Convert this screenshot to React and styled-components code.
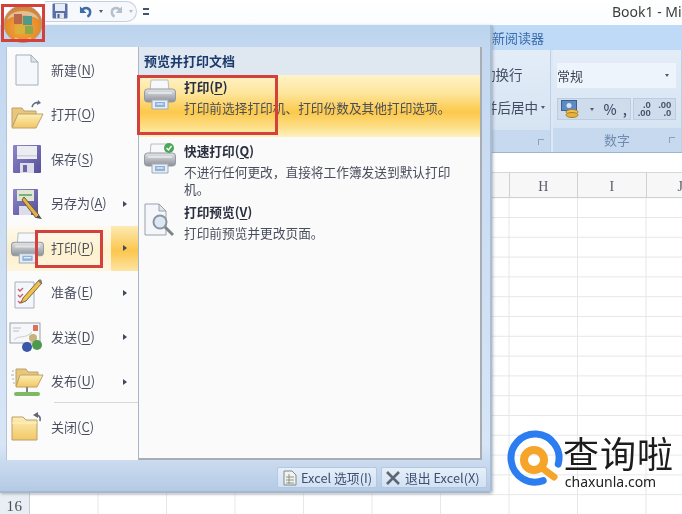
import React from 'react';
import styled, { createGlobalStyle } from 'styled-components';

const GlobalStyle = createGlobalStyle`
    html, body {
        margin: 0;
        padding: 0;
        background: #fff;
    }
    body {
        font-family: "Noto Sans CJK SC", "Noto Sans", sans-serif;
    }
`;

const Page = styled.div`
    position: relative;
    width: 682px;
    height: 514px;
    overflow: hidden;
    display: flex;
    flex-direction: column;
    background: #fff;
    filter: blur(0.4px);
`;

/* title bar and quick access */
const TitleBar = styled.div`
    height: 25px;
    flex: none;
    display: flex;
    align-items: center;
    padding-left: 45px;
    background: linear-gradient(#fff, #fafcfe);
    white-space: nowrap;
    overflow: hidden;
`;

const QuickAccess = styled.div`
    width: 92px;
    height: 21px;
    flex: none;
    box-sizing: border-box;
    display: flex;
    align-items: center;
    gap: 3px;
    padding-left: 7px;
    margin-top: -3px;
    border: 1px solid #c3d0e0;
    border-left: none;
    border-radius: 0 12px 12px 0;
    background: #f6f8fb;
`;

const TinyArrow = styled.span`
    width: 0;
    height: 0;
    margin: 0 3px;
    border: 2.5px solid transparent;
    border-top: 3px solid ${(props) => (props.$faded ? '#b5bcc6' : '#4a5a70')};
    border-bottom: none;
`;

const Customize = styled.span`
    width: 6px;
    height: 3px;
    margin-left: 6px;
    margin-top: -2px;
    flex: none;
    border-top: 2px solid #44536a;
    border-bottom: 2px solid #44536a;
`;

const BookTitle = styled.span`
    margin-left: 463px;
    margin-top: -2px;
    font-family: "Noto Sans", sans-serif;
    font-size: 14px;
    color: #3c3c3c;
`;

/* ribbon */
const TabStrip = styled.div`
    height: 25px;
    flex: none;
    box-sizing: border-box;
    padding-left: 492px;
    font-size: 13px;
    line-height: 25px;
    color: #3b6bab;
    background: #bfdaf7;
`;

const Ribbon = styled.div`
    height: 103px;
    flex: none;
    display: flex;
    background: #dce8f5;
    border-bottom: 1px solid #9db4cf;
    box-sizing: border-box;
`;

const RibbonGroup = styled.div`
    width: ${(props) => props.$width}px;
    flex: none;
    display: flex;
    flex-direction: column;
    box-sizing: border-box;
    margin-right: 2px;
    border-right: 1px solid #bed0e4;
    background: linear-gradient(#e3edf8, #d3e1f1);
`;

const GroupBody = styled.div`
    height: 80px;
    box-sizing: border-box;
    display: flex;
    flex-direction: column;
    padding-top: ${(props) => props.$top}px;
    gap: ${(props) => props.$gap}px;
`;

const AlignLabel = styled.div`
    margin-left: ${(props) => props.$left}px;
    height: 20px;
    display: flex;
    align-items: center;
    font-size: 13.5px;
    line-height: 20px;
    color: #3f4d62;
    white-space: nowrap;
`;

const GroupFoot = styled.div`
    position: relative;
    flex: 1;
    text-align: center;
    font-size: 13px;
    line-height: 24px;
    color: #6f8cb0;
    background: #c6d9ee;
`;

const Launcher = styled.span`
    position: absolute;
    right: ${(props) => props.$right}px;
    top: 9px;
    width: 5px;
    height: 5px;
    border-top: 1px solid #8ba2bd;
    border-left: 1px solid #8ba2bd;
`;

const NumberFormat = styled.div`
    margin-left: 4px;
    width: 119px;
    height: 25px;
    box-sizing: border-box;
    display: flex;
    align-items: center;
    justify-content: space-between;
    padding: 0 4px 0 0;
    font-size: 13px;
    color: #3a4454;
    background: #eef4fb;
`;

const NumberTools = styled.div`
    margin-left: 4px;
    width: 119px;
    display: flex;
    gap: 2px;
`;

const ToolSet = styled.div`
    height: 22px;
    width: ${(props) => props.$width}px;
    box-sizing: border-box;
    display: flex;
    align-items: center;
    justify-content: space-around;
    font-size: 14px;
    font-weight: 500;
    color: #44506a;
    background: #cfdcec;
    border: 1px solid #bccde1;
`;

const Decimals = styled.span`
    font-family: "Liberation Sans", sans-serif;
    font-size: 9.5px;
    font-weight: 700;
    line-height: 8px;
    text-align: right;
    color: #46536a;
`;

const FormulaBar = styled.div`
    height: 20px;
    flex: none;
    background: #fff;
    border-bottom: 1px solid #d3d8df;
    box-sizing: border-box;
`;

/* sheet */
const ColumnHeaders = styled.div`
    height: 25px;
    flex: none;
    display: flex;
    background: #f7f7f8;
    border-bottom: 1px solid #cdd0d5;
    box-sizing: border-box;
    padding-left: 30px;
`;

const ColumnHead = styled.div`
    width: 68.5px;
    flex: none;
    box-sizing: border-box;
    text-align: center;
    font-family: "Liberation Serif", serif;
    font-size: 14px;
    line-height: 28px;
    color: #5a6068;
    border-right: 1px solid #cdd0d5;
`;

const Sheet = styled.div`
    flex: 1;
    display: flex;
    min-height: 0;
`;

const RowHeaders = styled.div`
    width: 30px;
    flex: none;
    background: #e9eef4;
    border-right: 1px solid #c8ccd2;
    box-sizing: border-box;
`;

const RowHead = styled.div`
    height: 19.8px;
    line-height: 22px;
    text-align: center;
    font-family: "Liberation Serif", serif;
    font-size: 15px;
    color: #4a5058;
    letter-spacing: 0.5px;
`;

const Cells = styled.div`
    flex: 1;
    background-image:
        linear-gradient(to right, #e6e7e9 1px, transparent 1px),
        linear-gradient(to bottom, #e6e7e9 1px, transparent 1px);
    background-size: 68.5px 19.8px;
    background-position: 67.5px 0, 0 -0.8px;
`;

/* office menu */
const OfficeMenu = styled.div`
    position: absolute;
    left: 0;
    top: 25px;
    width: 492px;
    height: 468px;
    box-sizing: border-box;
    display: flex;
    flex-direction: column;
    padding: 22px 8px 0 6px;
    background: linear-gradient(#bcd4ee 0, #c3d8f0 5%, #d7e5f6 90%, #b4cae4 100%);
    border-bottom: 2px solid #a8b8cb;
    border-right: 2px solid #a9bdd5;
    border-radius: 0 0 3px 0;
    box-shadow: 1px 1px 3px rgba(90, 100, 115, 0.45);
`;

const MenuBody = styled.div`
    height: 413px;
    flex: none;
    display: flex;
    background: #fbfafa;
`;

const LeftColumn = styled.div`
    width: 132px;
    flex: none;
    box-sizing: border-box;
    padding-top: 1px;
    background: #fcfbfb;
    border-left: 1px solid #b4c4d6;
`;

const MenuRow = styled.div`
    position: relative;
    height: 44.5px;
    display: flex;
    align-items: center;
    box-sizing: border-box;
    padding-left: 1px;
    background: ${(props) => (props.$active ? 'linear-gradient(#fefaf0, #fdf0cc 55%, #fdf5df)' : 'transparent')};
`;

const RowIcon = styled.span`
    width: 38px;
    height: 36px;
    flex: none;
    display: flex;
    align-items: center;
    justify-content: center;
`;

const RowLabel = styled.span`
    margin: -2px 0 0 5px;
    font-size: 13px;
    color: #4b5162;
    white-space: nowrap;
    u {
        text-underline-offset: 2px;
    }
`;

const SplitArrow = styled.span`
    position: absolute;
    right: 0;
    top: 0;
    bottom: 0;
    width: 27px;
    display: flex;
    align-items: center;
    justify-content: center;
    background: ${(props) => (props.$active ? 'linear-gradient(#fdeab4, #fbc64d 55%, #fde5a4)' : 'transparent')};
`;

const ArrowGlyph = styled.span`
    width: 0;
    height: 0;
    margin-left: 1px;
    border: 3px solid transparent;
    border-left: 4px solid #3f4a5a;
    border-right: none;
`;

const MenuDivider = styled.div`
    margin: -2px 0 2px 47px;
    height: 1px;
    background: #d5d7db;
`;

const RightPanel = styled.div`
    flex: 1;
    min-width: 0;
    border-left: 1px solid #a6b7ca;
    border-right: 2px solid #a8adb4;
    border-bottom: 2px solid #a9adb3;
    background: #fbfafa;
`;

const PanelHeader = styled.div`
    height: 28px;
    box-sizing: border-box;
    padding-left: 5px;
    font-size: 13px;
    font-weight: 700;
    line-height: 28px;
    color: #1d3a6c;
    background: #dfe7f0;
`;

const PanelItem = styled.div`
    height: ${(props) => props.$height}px;
    box-sizing: border-box;
    display: flex;
    padding: ${(props) => props.$top}px 24px 0 4px;
    background: ${(props) => (props.$active
        ? 'linear-gradient(#fef3c8 0, #fde59a 30%, #fcc84a 60%, #fde08a 85%, #fef0c0 100%)'
        : 'transparent')};
`;

const PanelIcon = styled.span`
    width: 41px;
    flex: none;
`;

const PanelText = styled.div`
    min-width: 0;
`;

const PanelTitle = styled.div`
    font-size: 12.7px;
    font-weight: 700;
    line-height: 18px;
    color: #2a3040;
    u {
        text-underline-offset: 2px;
    }
`;

const PanelDesc = styled.div`
    margin-top: 2.5px;
    font-size: 12.7px;
    line-height: 17px;
    color: #484e5c;
`;

const MenuFooter = styled.div`
    flex: 1;
    display: flex;
    justify-content: flex-end;
    align-items: flex-start;
    gap: 4px;
    padding-top: 7px;
    margin-right: -5px;
`;

const FooterButton = styled.div`
    width: ${(props) => props.$width}px;
    height: 21px;
    box-sizing: border-box;
    display: flex;
    align-items: center;
    gap: 4px;
    padding-left: ${(props) => props.$pad}px;
    font-size: 12.8px;
    color: #3e4f6e;
    white-space: nowrap;
    background: linear-gradient(#e6effa, #d2e1f4);
    border: 1px solid #b4c8e0;
    border-radius: 2px;
`;

/* annotations */
const RedBox = styled.div`
    position: absolute;
    left: ${(props) => props.$x}px;
    top: ${(props) => props.$y}px;
    width: ${(props) => props.$w}px;
    height: ${(props) => props.$h}px;
    box-sizing: border-box;
    border: 3px solid #d4403c;
`;

const Orb = styled.div`
    position: absolute;
    left: 3px;
    top: 5px;
    width: 40px;
    height: 38px;
`;

const Watermark = styled.div`
    position: absolute;
    left: 507px;
    top: 430px;
    display: flex;
    align-items: flex-start;
    gap: 0;
`;

const BrandText = styled.div`
    display: flex;
    flex-direction: column;
    align-items: center;
`;

const BrandName = styled.div`
    font-size: 36px;
    line-height: 44px;
    letter-spacing: 1px;
    color: #1c1c1c;
    white-space: nowrap;
`;

const BrandUrl = styled.div`
    margin-left: -16px;
    font-family: "Noto Sans", sans-serif;
    font-size: 14px;
    line-height: 16px;
    color: #222;
`;

/* drawings */
const Defs = () => (
    <svg width="0" height="0" style={{ position: 'absolute' }}>
        <defs>
            <linearGradient id="printerBody" x1="0" y1="0" x2="0" y2="1">
                <stop offset="0" stopColor="#e2e4e6" />
                <stop offset="0.5" stopColor="#b7bbc0" />
                <stop offset="1" stopColor="#8b9096" />
            </linearGradient>
            <linearGradient id="folderFill" x1="0" y1="0" x2="0" y2="1">
                <stop offset="0" stopColor="#fdeeb4" />
                <stop offset="1" stopColor="#f2c766" />
            </linearGradient>
            <linearGradient id="diskFill" x1="0" y1="0" x2="1" y2="1">
                <stop offset="0" stopColor="#8f86c8" />
                <stop offset="1" stopColor="#55509a" />
            </linearGradient>
            <radialGradient id="orbFill" cx="0.5" cy="0.6" r="0.6">
                <stop offset="0" stopColor="#f3ab3e" />
                <stop offset="0.75" stopColor="#e58a2c" />
                <stop offset="1" stopColor="#b98258" />
            </radialGradient>
        </defs>
    </svg>
);

const PrinterIcon = ({ size = 34, badge = false }) => (
    <svg width={size} height={size} viewBox="0 0 34 34">
        <path d="M8 2h17l1 11H7z" fill="#f7f8f9" stroke="#b9bec4" />
        <rect x="1.500" y="11" width="31" height="13" rx="3" fill="url(#printerBody)" stroke="#969ba1" />
        <rect x="5" y="14" width="24" height="2" fill="#eceef0" opacity="0.7" />
        <path d="M9 22h16v9H9z" fill="#e6edf5" stroke="#a0aab6" />
        <rect x="12" y="24" width="10" height="5" fill="#8fb2dc" />
        <path d="M13.500 26h7" stroke="#fff" />
        {badge && (
            <>
                <circle cx="26" cy="6" r="5" fill="#4aa75a" />
                <path d="M23.500 6l2 2 3-4" stroke="#fff" strokeWidth="1.400" fill="none" />
            </>
        )}
    </svg>
);

const DocIcon = () => (
    <svg width="26" height="32" viewBox="0 0 26 32">
        <path d="M2 1h15l7 7v23H2z" fill="#f4f7fb" stroke="#a5afbc" />
        <path d="M17 1v7h7z" fill="#dfe5ec" stroke="#a5afbc" />
    </svg>
);

const OpenFolderIcon = () => (
    <svg width="34" height="30" viewBox="0 0 34 30">
        <path d="M22 7c1-4 4-5 7-4" stroke="#5f6c7c" strokeWidth="1.600" fill="none" />
        <path d="M28 0l3 3-4 2z" fill="#5f6c7c" />
        <path d="M2 27V8h10l2 3h12v4H8z" fill="#e8c67a" stroke="#b8a070" />
        <path d="M2 28l6-14h25l-7 14z" fill="url(#folderFill)" stroke="#c0a265" />
    </svg>
);

const FloppyIcon = () => (
    <svg width="30" height="30" viewBox="0 0 30 30">
        <rect x="1" y="1" width="28" height="28" rx="1" fill="url(#diskFill)" />
        <rect x="5" y="2" width="20" height="13" fill="#ecedf3" />
        <rect x="5" y="11" width="20" height="1.500" fill="#cfd2dc" />
        <rect x="8" y="19" width="14" height="10" fill="#dcdde8" />
        <rect x="11" y="21" width="4" height="7" fill="#6a64a8" />
    </svg>
);

const SaveAsIcon = () => (
    <svg width="32" height="32" viewBox="0 0 32 32">
        <rect x="2" y="1" width="25" height="26" rx="1" fill="url(#diskFill)" />
        <rect x="6" y="2" width="17" height="11" fill="#dfe6d4" />
        <rect x="8" y="6" width="13" height="2" fill="#7fae78" />
        <rect x="8" y="18" width="12" height="9" fill="#dcdde8" />
        <path d="M13 9l15 18-3 3L11 12z" fill="#e3b04a" stroke="#6c5a32" />
        <path d="M25 30l3-3 3 4z" fill="#4a4d55" />
    </svg>
);

const PrepareIcon = () => (
    <svg width="32" height="32" viewBox="0 0 32 32">
        <path d="M4 5h19v26H4z" fill="#f3f6fa" stroke="#a6b0bd" />
        <path d="M7 12l2 2 3-3M7 18l2 2 3-3M7 24l2 2 3-3" stroke="#d2586a" strokeWidth="1.300" fill="none" />
        <path d="M28 3l3 3-16 18-5 2 2-5z" fill="#f0c04e" stroke="#7f6a3a" />
        <path d="M27 4l3 3 1-3-2-2z" fill="#7f7f80" />
    </svg>
);

const SendIcon = () => (
    <svg width="36" height="34" viewBox="0 0 36 34">
        <rect x="1" y="3" width="30" height="20" fill="#f6f7f9" stroke="#9aa3ae" />
        <path d="M4 8h8M4 11h6" stroke="#b8bec6" />
        <rect x="24" y="5" width="5" height="6" fill="#d9735c" />
        <path d="M5 20c6-6 10 0 18-8" stroke="#c7ced6" fill="none" />
        <circle cx="24" cy="18" r="4" fill="#c6b27c" />
        <circle cx="18" cy="27" r="5" fill="#3857a8" />
        <circle cx="28" cy="25" r="5" fill="#4b9a4c" />
    </svg>
);

const PublishIcon = () => (
    <svg width="34" height="32" viewBox="0 0 34 32">
        <path d="M2 5h2M1 9h3M2 13h2M3 17h2" stroke="#a8adb5" />
        <path d="M6 20V3h10l2 3h10v4H10z" fill="#e8c67a" stroke="#b8a070" />
        <path d="M6 21l4-12h23l-6 12z" fill="url(#folderFill)" stroke="#c0a265" />
        <path d="M17 21v6" stroke="#7b8791" strokeWidth="2" />
        <rect x="4" y="26" width="26" height="4" rx="2" fill="#7eb964" />
    </svg>
);

const CloseFolderIcon = () => (
    <svg width="34" height="30" viewBox="0 0 34 30">
        <path d="M30 9c1-4-1-6-4-6" stroke="#5f6770" strokeWidth="1.600" fill="none" />
        <path d="M23 3l5-3v6z" fill="#5f6770" />
        <path d="M2 28V5h11l3 3h11v20z" fill="url(#folderFill)" stroke="#b89f6a" />
        <path d="M2 11h25" stroke="#fff3c8" />
    </svg>
);

const PreviewIcon = () => (
    <svg width="34" height="34" viewBox="0 0 34 34">
        <path d="M2 1h14l7 7v24H2z" fill="#f4f6f9" stroke="#98a2ae" />
        <path d="M16 1v7h7z" fill="#dfe5ec" stroke="#98a2ae" />
        <circle cx="17" cy="19" r="6.500" fill="#dbe8f4" stroke="#8b959f" strokeWidth="2" />
        <path d="M22 24l8 8" stroke="#7c858e" strokeWidth="3" />
    </svg>
);

const SaveSmall = () => (
    <svg width="16" height="16" viewBox="0 0 16 16">
        <rect x="0.500" y="0.500" width="15" height="15" rx="1" fill="#5a6fa8" />
        <rect x="3" y="1" width="10" height="7" fill="#e8edf5" />
        <rect x="4" y="10" width="8" height="5.500" fill="#dfe3ee" />
        <rect x="5.500" y="11" width="2" height="4" fill="#4a5c92" />
    </svg>
);

const UndoSmall = ({ faded }) => (
    <svg width="14" height="15" viewBox="0 0 15 15" style={faded ? { transform: 'scaleX(-1)' } : undefined}>
        <path d="M3 6c4-4 9-2 9 2 0 2-1 4-3 5" stroke={faded ? '#b4c0cc' : '#3f6da8'} strokeWidth="2.600" fill="none" />
        <path d="M1 2v7h7z" fill={faded ? '#b4c0cc' : '#3f6da8'} />
    </svg>
);

const OrbIcon = () => (
    <svg width="40" height="38" viewBox="0 0 40 38">
        <ellipse cx="20" cy="19" rx="19" ry="18.500" fill="url(#orbFill)" stroke="#b89a80" />
        <path d="M4 15C7 3 33 3 36 15 30 9 10 9 4 15z" fill="#dcc9b0" opacity="0.85" />
        <rect x="11" y="9" width="8" height="10" fill="#b9664a" />
        <rect x="20" y="11" width="9" height="9" fill="#4f9a8a" />
        <rect x="12" y="20" width="9" height="9" fill="#dcae3a" />
        <rect x="22" y="21" width="8" height="8" fill="#8aa94a" />
        <path d="M12 33c5 3 11 3 16 0" stroke="#f6c66a" strokeWidth="2" fill="none" />
    </svg>
);

const CoinsIcon = () => (
    <svg width="20" height="19" viewBox="0 0 20 19">
        <rect x="0.500" y="0.500" width="15" height="10" fill="#5b8bc6" stroke="#3c5f8e" />
        <circle cx="8" cy="5.500" r="2.500" fill="#d6e6f6" />
        <ellipse cx="11" cy="12" rx="6" ry="2.500" fill="#f0c050" stroke="#a9802a" />
        <ellipse cx="11" cy="15" rx="6" ry="2.500" fill="#e8b23a" stroke="#a9802a" />
    </svg>
);

const OptionsIcon = () => (
    <svg width="14" height="16" viewBox="0 0 14 16">
        <path d="M1 1h8l4 4v10H1z" fill="#f2f2ee" stroke="#7f8790" />
        <path d="M3 7h8M3 10h8M3 13h8M6 4v10" stroke="#8d9488" />
    </svg>
);

const ExitIcon = () => (
    <svg width="16" height="14" viewBox="0 0 16 14">
        <path d="M2 1l12 12M14 1L2 13" stroke="#5f6670" strokeWidth="2.600" />
    </svg>
);

const LogoMark = () => (
    <svg width="56" height="56" viewBox="0 0 56 56">
        <path d="M51.200 34.200A24 24 0 1 0 36.200 50.600" fill="none" stroke="#2b7df0" strokeWidth="7" strokeLinecap="round" />
        <circle cx="27" cy="30" r="10" fill="none" stroke="#f6a52a" strokeWidth="8" />
        <path d="M35 38l12 9" stroke="#f6a52a" strokeWidth="7" strokeLinecap="round" />
    </svg>
);

const menuItems = [
    { label: '新建', key: 'N', icon: <DocIcon /> },
    { label: '打开', key: 'O', icon: <OpenFolderIcon /> },
    { label: '保存', key: 'S', icon: <FloppyIcon /> },
    { label: '另存为', key: 'A', icon: <SaveAsIcon />, arrow: true },
    { label: '打印', key: 'P', icon: <PrinterIcon size={35} />, arrow: true, active: true },
    { label: '准备', key: 'E', icon: <PrepareIcon />, arrow: true },
    { label: '发送', key: 'D', icon: <SendIcon />, arrow: true },
    { label: '发布', key: 'U', icon: <PublishIcon />, arrow: true },
];

// the menu covers columns A-G and rows 1-15, so those stay unlabelled
const columns = ['', '', '', '', '', '', '', 'H', 'I', 'J'];
const rows = Array.from({ length: 16 }, (_, i) => (i === 15 ? '16' : ''));

const Shortcut = ({ label, hotkey }) => (
    <>
        {label}(<u>{hotkey}</u>)
    </>
);

const App = () => {
    return (
        <>
            <GlobalStyle />
            <Page>
                <Defs />
                <TitleBar>
                    <QuickAccess>
                        <SaveSmall />
                        <span style={{ width: 5 }} />
                        <UndoSmall />
                        <TinyArrow />
                        <UndoSmall faded />
                        <TinyArrow $faded />
                    </QuickAccess>
                    <Customize />
                    <BookTitle>Book1 - Microsoft Excel</BookTitle>
                </TitleBar>
                <TabStrip>新阅读器</TabStrip>
                <Ribbon>
                    <RibbonGroup $width={551}>
                        <GroupBody $top={14} $gap={13}>
                            <AlignLabel $left={482}>动换行</AlignLabel>
                            <AlignLabel $left={484}>并后居中<TinyArrow /></AlignLabel>
                        </GroupBody>
                        <GroupFoot><Launcher $right={6} /></GroupFoot>
                    </RibbonGroup>
                    <RibbonGroup $width={129}>
                        <GroupBody $top={13} $gap={10}>
                            <NumberFormat>常规<TinyArrow /></NumberFormat>
                            <NumberTools>
                                <ToolSet $width={74}>
                                    <CoinsIcon />
                                    <TinyArrow />
                                    <span>%</span>
                                    <span>,</span>
                                </ToolSet>
                                <ToolSet $width={43}>
                                    <Decimals>.0<br />.00</Decimals>
                                    <Decimals>.00<br />.0</Decimals>
                                </ToolSet>
                            </NumberTools>
                        </GroupBody>
                        <GroupFoot>数字<Launcher $right={6} /></GroupFoot>
                    </RibbonGroup>
                </Ribbon>
                <FormulaBar />
                <ColumnHeaders>
                    {columns.map((col, i) => (
                        <ColumnHead key={i}>{col}</ColumnHead>
                    ))}
                </ColumnHeaders>
                <Sheet>
                    <RowHeaders>
                        {rows.map((row, i) => (
                            <RowHead key={i}>{row}</RowHead>
                        ))}
                    </RowHeaders>
                    <Cells />
                </Sheet>

                <OfficeMenu>
                    <MenuBody>
                        <LeftColumn>
                            {menuItems.map((item) => (
                                <MenuRow key={item.key} $active={item.active}>
                                    <RowIcon>{item.icon}</RowIcon>
                                    <RowLabel><Shortcut label={item.label} hotkey={item.key} /></RowLabel>
                                    {item.arrow && (
                                        <SplitArrow $active={item.active}><ArrowGlyph /></SplitArrow>
                                    )}
                                </MenuRow>
                            ))}
                            <MenuDivider />
                            <MenuRow>
                                <RowIcon><CloseFolderIcon /></RowIcon>
                                <RowLabel><Shortcut label="关闭" hotkey="C" /></RowLabel>
                            </MenuRow>
                        </LeftColumn>
                        <RightPanel>
                            <PanelHeader>预览并打印文档</PanelHeader>
                            <PanelItem $active $height={62} $top={3}>
                                <PanelIcon><PrinterIcon /></PanelIcon>
                                <PanelText>
                                    <PanelTitle><Shortcut label="打印" hotkey="P" /></PanelTitle>
                                    <PanelDesc>打印前选择打印机、打印份数及其他打印选项。</PanelDesc>
                                </PanelText>
                            </PanelItem>
                            <PanelItem $height={62} $top={5}>
                                <PanelIcon><PrinterIcon badge /></PanelIcon>
                                <PanelText>
                                    <PanelTitle><Shortcut label="快速打印" hotkey="Q" /></PanelTitle>
                                    <PanelDesc>不进行任何更改，直接将工作簿发送到默认打印机。</PanelDesc>
                                </PanelText>
                            </PanelItem>
                            <PanelItem $height={62} $top={4}>
                                <PanelIcon><PreviewIcon /></PanelIcon>
                                <PanelText>
                                    <PanelTitle><Shortcut label="打印预览" hotkey="V" /></PanelTitle>
                                    <PanelDesc>打印前预览并更改页面。</PanelDesc>
                                </PanelText>
                            </PanelItem>
                        </RightPanel>
                    </MenuBody>
                    <MenuFooter>
                        <FooterButton $width={100} $pad={5}><OptionsIcon />Excel 选项(I)</FooterButton>
                        <FooterButton $width={106} $pad={3}><ExitIcon />退出 Excel(X)</FooterButton>
                    </MenuFooter>
                </OfficeMenu>

                <Orb><OrbIcon /></Orb>
                <RedBox $x={1} $y={4} $w={44} $h={38} />
                <RedBox $x={137} $y={75} $w={141} $h={60} />
                <RedBox $x={35} $y={230} $w={68} $h={38} />

                <Watermark>
                    <LogoMark />
                    <BrandText>
                        <BrandName>查询啦</BrandName>
                        <BrandUrl>chaxunla.com</BrandUrl>
                    </BrandText>
                </Watermark>
            </Page>
        </>
    );
};

export default App;
